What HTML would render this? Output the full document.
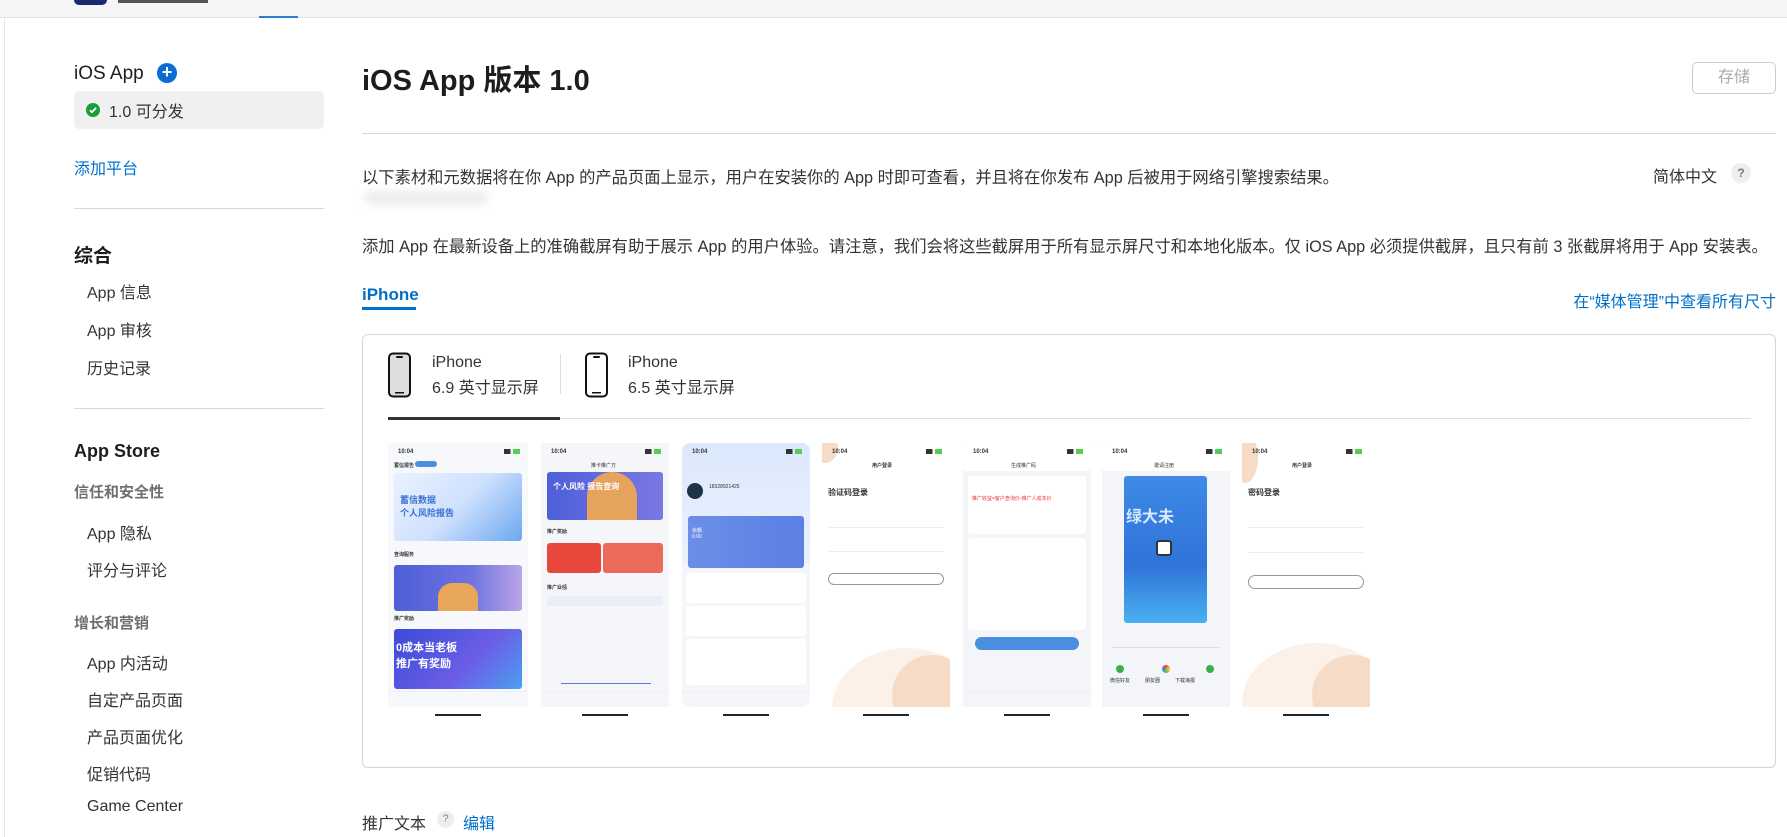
<!DOCTYPE html>
<html><head><meta charset="utf-8"><style>
*{box-sizing:border-box;margin:0;padding:0}
body{width:1787px;height:837px;overflow:hidden;background:#fff;font-family:"Liberation Sans","Noto Sans CJK SC",sans-serif;color:#1d1d1f;position:relative}
.a{position:absolute;white-space:nowrap}
.nav{position:absolute;left:0;top:0;width:1787px;height:18px;background:#f5f5f7;border-bottom:1px solid #e3e3e6}
.side{font-size:16px;color:#333}
.blue{color:#0070c9}
.hd{font-weight:bold;font-size:19px;color:#1d1d1f}
.sub{font-size:15px;color:#6e6e73;font-weight:bold}
.shot{position:absolute;top:443px;width:128px;height:264px;background:#fff;overflow:hidden;font-size:5px;color:#333}
.bar{position:absolute;top:714px;width:46px;height:2px;background:#222}
.sb{position:absolute;top:6px;left:10px;font-size:6px;font-weight:bold}
.sbr{position:absolute;top:6px;right:8px;width:16px;height:5px;background:linear-gradient(90deg,#333 40%,transparent 40%,transparent 55%,#5c5 55%)}
.blk{position:absolute;border-radius:3px}
.ln{position:absolute;height:1px;background:#eee}
</style></head><body>
<div class="nav"></div>
<div class="a" style="left:74px;top:0;width:33px;height:5px;background:#1b2a6b;border-radius:0 0 6px 6px"></div>
<div class="a" style="left:118px;top:0;width:90px;height:3px;background:#555"></div>
<div class="a" style="left:259px;top:16px;width:39px;height:2px;background:#2d7dd2"></div>
<div class="a" style="left:4px;top:18px;width:1px;height:819px;background:#e6e6e6"></div>

<!-- sidebar -->
<div class="a" style="left:74px;top:63px;font-size:19px;color:#1d1d1f">iOS App</div>
<div class="a" style="left:157px;top:63px;width:20px;height:20px;border-radius:50%;background:#0a6ed1;color:#fff;font-size:18px;font-weight:bold;line-height:19px;text-align:center">+</div>
<div class="a" style="left:74px;top:91px;width:250px;height:38px;background:#f0f0f0;border-radius:5px"></div>
<div class="a" style="left:86px;top:103px;width:14px;height:14px;border-radius:50%;background:#1a9e3a"></div>
<svg class="a" style="left:86px;top:103px" width="14" height="14"><path d="M4 7.2l2 2 4-4.4" stroke="#fff" stroke-width="1.8" fill="none"/></svg>
<div class="a side" style="left:109px;top:100px;font-size:16px;top:98px">1.0 可分发</div>
<div class="a side blue" style="left:74px;top:155px">添加平台</div>
<div class="a" style="left:74px;top:208px;width:250px;height:1px;background:#d8d8d8"></div>
<div class="a hd" style="left:74px;top:241px">综合</div>
<div class="a side" style="left:87px;top:279px">App 信息</div>
<div class="a side" style="left:87px;top:317px">App 审核</div>
<div class="a side" style="left:87px;top:355px">历史记录</div>
<div class="a" style="left:74px;top:408px;width:250px;height:1px;background:#d8d8d8"></div>
<div class="a hd" style="left:74px;top:441px;font-size:18px">App Store</div>
<div class="a sub" style="left:74px;top:481px">信任和安全性</div>
<div class="a side" style="left:87px;top:520px">App 隐私</div>
<div class="a side" style="left:87px;top:557px">评分与评论</div>
<div class="a sub" style="left:74px;top:612px">增长和营销</div>
<div class="a side" style="left:87px;top:650px">App 内活动</div>
<div class="a side" style="left:87px;top:687px">自定产品页面</div>
<div class="a side" style="left:87px;top:724px">产品页面优化</div>
<div class="a side" style="left:87px;top:761px">促销代码</div>
<div class="a side" style="left:87px;top:798px">Game Center</div>

<!-- main -->
<div class="a" style="left:362px;top:57px;font-size:29px;font-weight:bold">iOS App 版本 1.0</div>
<div class="a" style="left:1692px;top:62px;width:84px;height:32px;border:1px solid #ccc;border-radius:5px;color:#aaa;font-size:16px;text-align:center;line-height:30px">存储</div>
<div class="a" style="left:362px;top:133px;width:1414px;height:1px;background:#d8d8d8"></div>
<div class="a" style="left:362px;top:164px;font-size:16.3px;color:#333">以下素材和元数据将在你 App 的产品页面上显示，用户在安装你的 App 时即可查看，并且将在你发布 App 后被用于网络引擎搜索结果。</div>
<div class="a" style="left:1653px;top:163px;font-size:16px;color:#333">简体中文</div>
<div class="a" style="left:1731px;top:163px;width:20px;height:20px;border-radius:50%;background:#eee;color:#777;font-size:12px;text-align:center;line-height:20px;font-weight:bold">?</div>
<div class="a" style="left:364px;top:191px;width:124px;height:14px;background:#ededed;filter:blur(4px);border-radius:7px"></div>
<div class="a" style="left:362px;top:233px;font-size:16.3px;color:#333">添加 App 在最新设备上的准确截屏有助于展示 App 的用户体验。请注意，我们会将这些截屏用于所有显示屏尺寸和本地化版本。仅 iOS App 必须提供截屏，且只有前 3 张截屏将用于 App 安装表。</div>
<div class="a" style="left:362px;top:285px;font-size:17px;font-weight:bold;color:#0070c9">iPhone</div>
<div class="a" style="left:362px;top:307px;width:54px;height:3px;background:#0070c9"></div>
<div class="a" style="right:11px;top:288px;font-size:16px;color:#0070c9">在“媒体管理”中查看所有尺寸</div>

<div class="a" style="left:362px;top:334px;width:1414px;height:434px;border:1px solid #d5d5d5;border-radius:6px"></div>
<svg class="a" style="left:387px;top:352px" width="28" height="47"><rect x="2" y="1.5" width="21" height="43" rx="4" fill="#ddd" stroke="#111" stroke-width="2"/><rect x="9" y="4" width="7" height="2" rx="1" fill="#111"/><rect x="8" y="40" width="9" height="1.5" fill="#111"/></svg>
<div class="a" style="left:432px;top:354px;font-size:16px;color:#333">iPhone</div>
<div class="a" style="left:432px;top:374px;font-size:16px;color:#333">6.9 英寸显示屏</div>
<div class="a" style="left:560px;top:354px;width:1px;height:40px;background:#ddd"></div>
<svg class="a" style="left:584px;top:352px" width="28" height="47"><rect x="2" y="1.5" width="21" height="43" rx="4" fill="#fff" stroke="#111" stroke-width="2"/><rect x="9" y="4" width="7" height="2" rx="1" fill="#111"/><rect x="8" y="40" width="9" height="1.5" fill="#111"/></svg>
<div class="a" style="left:628px;top:354px;font-size:16px;color:#333">iPhone</div>
<div class="a" style="left:628px;top:374px;font-size:16px;color:#333">6.5 英寸显示屏</div>
<div class="a" style="left:388px;top:418px;width:1363px;height:1px;background:#ddd"></div>
<div class="a" style="left:388px;top:417px;width:172px;height:3px;background:#333"></div>

<!-- screenshots -->
<div class="shot" style="left:388px;width:140px;background:#f7f8fb"><div class="sb">10:04</div><div class="sbr"></div>
<div class="a" style="left:6px;top:19px;font-weight:bold">蓄信报告</div><div class="blk" style="left:27px;top:18px;width:22px;height:6px;background:#4a8fe0"></div>
<div class="blk" style="left:6px;top:30px;width:128px;height:68px;background:linear-gradient(135deg,#eaf2ff,#cfe0ff 50%,#6aa8ef)"></div>
<div class="a" style="left:12px;top:50px;font-size:9px;color:#3b6fd0;font-weight:bold">蓄信数据<br>个人风险报告</div>
<div class="a" style="left:6px;top:108px;font-weight:bold">查询服务</div>
<div class="blk" style="left:6px;top:122px;width:128px;height:46px;background:linear-gradient(90deg,#4e5fd8,#6e72e0 60%,#b9a6e6)"></div>
<div class="blk" style="left:50px;top:140px;width:40px;height:28px;background:#e7a65a;border-radius:14px 14px 0 0"></div>
<div class="a" style="left:6px;top:172px;font-weight:bold">推广奖励</div>
<div class="blk" style="left:6px;top:186px;width:128px;height:60px;background:linear-gradient(135deg,#3b4bd8,#6b5fe6 60%,#4aa0f0)"></div>
<div class="a" style="left:8px;top:196px;font-size:11px;color:#fff;font-weight:bold">0成本当老板<br>推广有奖励</div>
<div class="ln" style="left:0;top:248px;width:140px"></div></div>

<div class="shot" style="left:541px;background:#f5f6fa"><div class="sb">10:04</div><div class="sbr"></div>
<div class="a" style="left:50px;top:19px">推卡推广方</div>
<div class="blk" style="left:6px;top:29px;width:116px;height:48px;background:linear-gradient(90deg,#4e5fd8,#7a78e4)"></div>
<div class="blk" style="left:46px;top:29px;width:50px;height:48px;background:#e6a35c;border-radius:25px 25px 0 0"></div>
<div class="a" style="left:12px;top:38px;font-size:8px;color:#fff;font-weight:bold">个人风险 报告查询</div>
<div class="a" style="left:6px;top:85px;font-weight:bold">推广奖励</div>
<div class="blk" style="left:6px;top:100px;width:54px;height:30px;background:#e8483c"></div>
<div class="blk" style="left:62px;top:100px;width:60px;height:30px;background:#ec6a5a"></div>
<div class="a" style="left:6px;top:141px;font-weight:bold">推广业绩</div>
<div class="blk" style="left:6px;top:153px;width:116px;height:10px;background:#eaeef7"></div>
<div class="ln" style="left:20px;top:240px;width:90px;background:#5a7bd8"></div>
<div class="ln" style="left:0;top:248px;width:128px"></div></div>

<div class="shot" style="left:682px;background:#f4f6fa;border-radius:8px"><div class="blk" style="left:0;top:0;width:128px;height:120px;background:linear-gradient(#dbe8fc,#eaf1fd);border-radius:8px 8px 0 0"></div><div class="sb">10:04</div><div class="sbr"></div>
<div class="blk" style="left:5px;top:40px;width:16px;height:16px;border-radius:50%;background:#1d3346"></div>
<div class="a" style="left:27px;top:41px">18328921425</div>
<div class="blk" style="left:6px;top:73px;width:116px;height:52px;background:linear-gradient(90deg,#6b8fe8,#5b7fe4)"></div>
<div class="a" style="left:10px;top:84px;color:#fff">余额<br>0.00</div>
<div class="blk" style="left:4px;top:130px;width:120px;height:30px;background:#fff"></div>
<div class="blk" style="left:4px;top:163px;width:120px;height:30px;background:#fff"></div>
<div class="blk" style="left:4px;top:196px;width:120px;height:46px;background:#fff"></div>
<div class="ln" style="left:0;top:248px;width:128px"></div></div>

<div class="shot" style="left:822px;background:#fff"><div class="blk" style="left:-10px;top:-10px;width:26px;height:30px;border-radius:50%;background:#f6dcc6"></div><div class="sb">10:04</div><div class="sbr"></div>
<div class="a" style="left:50px;top:19px;font-weight:bold">用户登录</div>
<div class="a" style="left:6px;top:44px;font-size:8px;font-weight:bold">验证码登录</div>
<div class="ln" style="left:6px;top:84px;width:116px"></div>
<div class="ln" style="left:6px;top:108px;width:116px"></div>
<div class="blk" style="left:6px;top:130px;width:116px;height:12px;border:1px solid #999;border-radius:6px"></div>
<div class="blk" style="left:10px;top:205px;width:150px;height:120px;border-radius:50%;background:#fbf1e8"></div>
<div class="blk" style="left:70px;top:212px;width:80px;height:80px;border-radius:50%;background:#f6dcc6"></div>
</div>

<div class="shot" style="left:963px;background:#f4f5f8"><div class="blk" style="left:0;top:0;width:128px;height:28px;background:#fff"></div><div class="sb">10:04</div><div class="sbr"></div>
<div class="a" style="left:48px;top:19px">生成推广码</div>
<div class="blk" style="left:5px;top:33px;width:118px;height:58px;background:#fff"></div>
<div class="a" style="left:9px;top:52px;color:#e33">推广收益=客户查询价-推广人成本价</div>
<div class="blk" style="left:5px;top:95px;width:118px;height:92px;background:#fff"></div>
<div class="blk" style="left:12px;top:194px;width:104px;height:13px;background:#4a8ee0;border-radius:7px"></div>
<div class="ln" style="left:0;top:248px;width:128px"></div></div>

<div class="shot" style="left:1102px;background:#f4f5f8"><div class="blk" style="left:0;top:0;width:128px;height:28px;background:#fff"></div><div class="sb">10:04</div><div class="sbr"></div>
<div class="a" style="left:52px;top:19px">邀请注册</div>
<div class="blk" style="left:22px;top:33px;width:83px;height:147px;background:linear-gradient(#3e8ae6,#2f73d8 60%,#4ab0f0)"></div>
<div class="a" style="left:24px;top:60px;font-size:16px;color:#d7e9ff;font-weight:bold">绿大未</div>
<div class="blk" style="left:54px;top:97px;width:16px;height:16px;background:#fff;border:2px solid #333"></div>
<div class="ln" style="left:10px;top:204px;width:108px;background:#ddd"></div>
<div class="blk" style="left:14px;top:222px;width:8px;height:8px;border-radius:50%;background:#3bb04a"></div>
<div class="blk" style="left:60px;top:222px;width:8px;height:8px;border-radius:50%;background:conic-gradient(#e44,#fc3,#4c4,#48f,#e44)"></div>
<div class="blk" style="left:104px;top:222px;width:8px;height:8px;border-radius:50%;background:#3bb04a"></div>
<div class="a" style="left:8px;top:234px">微信好友　　　朋友圈　　　下载海报</div>
</div>

<div class="shot" style="left:1242px;background:#fff"><div class="blk" style="left:-10px;top:-10px;width:26px;height:50px;border-radius:50%;background:#f6dcc6"></div><div class="sb">10:04</div><div class="sbr"></div>
<div class="a" style="left:50px;top:19px;font-weight:bold">用户登录</div>
<div class="a" style="left:6px;top:44px;font-size:8px;font-weight:bold">密码登录</div>
<div class="ln" style="left:6px;top:84px;width:116px"></div>
<div class="ln" style="left:6px;top:109px;width:116px"></div>
<div class="blk" style="left:6px;top:132px;width:116px;height:14px;border:1px solid #999;border-radius:7px"></div>
<div class="blk" style="left:0;top:200px;width:150px;height:120px;border-radius:50%;background:#fbf1e8"></div>
<div class="blk" style="left:70px;top:212px;width:80px;height:80px;border-radius:50%;background:#f6dcc6"></div>
</div>
<div class="bar" style="left:435px"></div><div class="bar" style="left:582px"></div><div class="bar" style="left:723px"></div><div class="bar" style="left:863px"></div><div class="bar" style="left:1004px"></div><div class="bar" style="left:1143px"></div><div class="bar" style="left:1283px"></div>

<div class="a" style="left:362px;top:810px;font-size:16px;color:#333">推广文本</div>
<div class="a" style="left:437px;top:811px;width:17px;height:17px;border-radius:50%;background:#eee;color:#888;font-size:11px;text-align:center;line-height:17px">?</div>
<div class="a" style="left:463px;top:810px;font-size:16px;color:#0070c9">编辑</div>
</body></html>
